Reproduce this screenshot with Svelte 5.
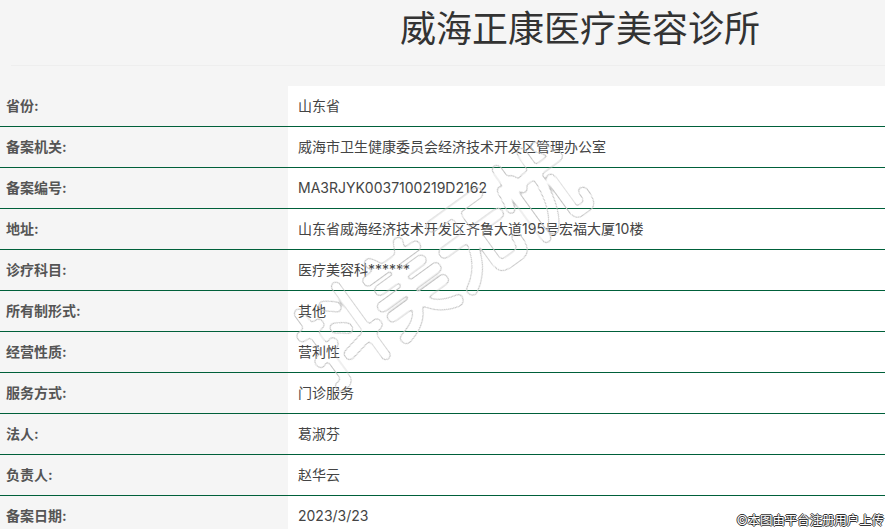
<script>
  const rows = [
    { label: "省份:", value: "山东省" },
    { label: "备案机关:", value: "威海市卫生健康委员会经济技术开发区管理办公室" },
    { label: "备案编号:", value: "MA3RJYK0037100219D2162" },
    { label: "地址:", value: "山东省威海经济技术开发区齐鲁大道195号宏福大厦10楼" },
    { label: "诊疗科目:", value: "医疗美容科******" },
    { label: "所有制形式:", value: "其他" },
    { label: "经营性质:", value: "营利性" },
    { label: "服务方式:", value: "门诊服务" },
    { label: "法人:", value: "葛淑芬" },
    { label: "负责人:", value: "赵华云" },
    { label: "备案日期:", value: "2023/3/23" },
  ];
</script>

<div class="page">
  <header class="head">
    <h1>威海正康医疗美容诊所</h1>
  </header>

  <div class="table">
    {#each rows as row}
      <div class="row">
        <div class="label">{row.label}</div>
        <div class="value">{row.value}</div>
      </div>
    {/each}
  </div>

  <!-- hollow outline round a thickened glyph, for the watermark -->
  <svg class="defs" width="0" height="0" aria-hidden="true">
    <filter id="hollow" x="-10%" y="-20%" width="120%" height="140%" color-interpolation-filters="sRGB">
      <feGaussianBlur in="SourceAlpha" stdDeviation="2.4" result="soft" />
      <feComponentTransfer in="soft" result="outer">
        <feFuncA type="linear" slope="14" intercept="-1.8" />
      </feComponentTransfer>
      <feComponentTransfer in="soft" result="inner">
        <feFuncA type="linear" slope="14" intercept="-3.2" />
      </feComponentTransfer>
      <feComposite in="outer" in2="inner" operator="out" result="ring" />
      <feFlood flood-color="#c2c2c2" />
      <feComposite in2="ring" operator="in" />
    </filter>
  </svg>
  <div class="mark">抖美无忧</div>
  <div class="credit">©本图由平台注册用户上传</div>
</div>

<style>
  :global(body) {
    margin: 0;
    background: #f5f5f5;
    overflow: hidden;
  }

  .page {
    position: relative;
    width: 885px;
    height: 529px;
    overflow: hidden;
    background: #f5f5f5;
    font-family: "Inter", "Noto Sans CJK SC", sans-serif;
    font-size: 14px;
    color: #444;
  }

  .head {
    height: 65px;
    margin-left: 11px;
    margin-bottom: 20px;
    border-bottom: 1px solid #eeeeee;
  }

  h1 {
    margin: 0;
    padding-left: 389px;
    padding-top: 5px;
    font-size: 36px;
    line-height: 48px;
    font-weight: 400;
    color: #333;
    white-space: nowrap;
  }

  .row {
    display: grid;
    grid-template-columns: 288px 1fr;
    height: 41px;
    box-sizing: border-box;
    border-bottom: 1px solid #00603a;
    line-height: 40px;
  }

  .label {
    padding-left: 6px;
    font-weight: 700;
    color: #555;
  }

  .value {
    padding-left: 10px;
    background: #fff;
    white-space: nowrap;
  }

  .defs {
    position: absolute;
  }

  .mark {
    position: absolute;
    left: 266px;
    top: 219px;
    font-size: 88px;
    font-weight: 400;
    line-height: 1;
    white-space: nowrap;
    color: #000;
    filter: url(#hollow);
    transform: rotate(-36deg) scale(0.93, 1.1);
    pointer-events: none;
  }

  .credit {
    position: absolute;
    right: 1px;
    bottom: 0;
    font-size: 12.4px;
    line-height: 16px;
    color: #fff;
    text-shadow: 1px 0 0 #333, -1px 0 0 #333, 0 1px 0 #333, 0 -1px 0 #333;
    white-space: nowrap;
  }
</style>
